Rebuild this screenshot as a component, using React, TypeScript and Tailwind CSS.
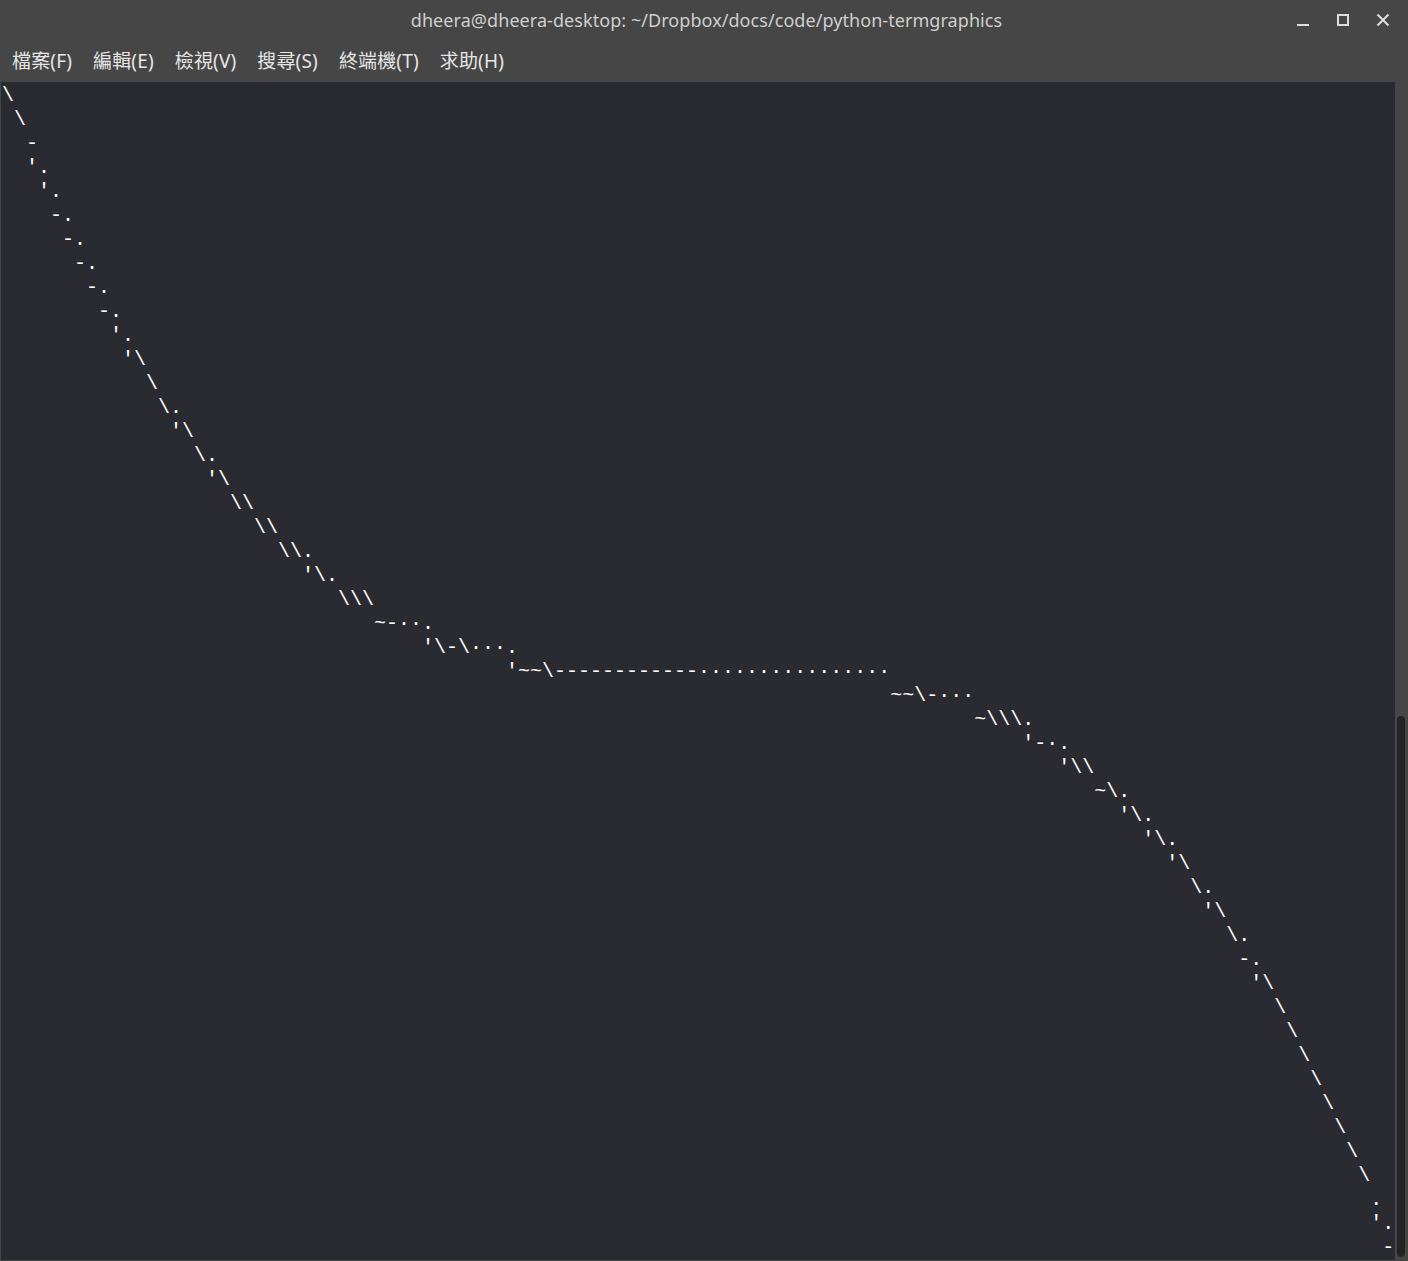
import React from 'react';

// rows of the plot: [column, text]
const ROWS: [number, string][] = [
  [0, '\\'],
  [1, '\\'],
  [2, '-'],
  [2, "'."],
  [3, "'."],
  [4, '-.'],
  [5, '-.'],
  [6, '-.'],
  [7, '-.'],
  [8, '-.'],
  [9, "'."],
  [10, "'\\"],
  [12, '\\'],
  [13, '\\.'],
  [14, "'\\"],
  [16, '\\.'],
  [17, "'\\"],
  [19, '\\\\'],
  [21, '\\\\'],
  [23, '\\\\.'],
  [25, "'\\."],
  [28, '\\\\\\'],
  [31, '~-··.'],
  [35, "'\\-\\···."],
  [42, "'~~\\------------················"],
  [74, '~~\\-···'],
  [81, '~\\\\\\.'],
  [85, "'-·."],
  [88, "'\\\\"],
  [91, '~\\.'],
  [93, "'\\."],
  [95, "'\\."],
  [97, "'\\"],
  [99, '\\.'],
  [100, "'\\"],
  [102, '\\.'],
  [103, '-.'],
  [104, "'\\"],
  [106, '\\'],
  [107, '\\'],
  [108, '\\'],
  [109, '\\'],
  [110, '\\'],
  [111, '\\'],
  [112, '\\'],
  [113, '\\'],
  [114, '.'],
  [114, "'."],
  [115, '-'],
];

const MENU = ['檔案(F)', '編輯(E)', '檢視(V)', '搜尋(S)', '終端機(T)', '求助(H)'];

export default function App() {
  const text = ROWS.map(([col, s]) => ' '.repeat(col) + s).join('\n');

  return (
    <div className="w-[1408px] h-[1261px] flex flex-col bg-[#464646] pb-[1px] overflow-hidden">
      {/* Title bar */}
      <div className="h-[40px] flex items-center shrink-0">
        <div className="w-[160px]" />
        <div className="flex-1 text-center text-[#cfcfcf] text-[18px] tracking-[0.06px] font-['Noto_Sans',sans-serif] leading-none pb-[1px] pl-[5px]">
          dheera@dheera-desktop: ~/Dropbox/docs/code/python-termgraphics
        </div>
        <div className="w-[160px] flex items-center justify-end gap-[26px] pr-[18px]">
          <svg width="14" height="14" viewBox="0 0 14 14" className="text-[#dedede]">
            <path d="M1 12h12" stroke="currentColor" strokeWidth="2" />
          </svg>
          <svg width="14" height="14" viewBox="0 0 14 14" className="text-[#dedede]">
            <rect x="2" y="2" width="10" height="10" fill="none" stroke="currentColor" strokeWidth="2" />
          </svg>
          <svg width="14" height="14" viewBox="0 0 14 14" className="text-[#dedede]">
            <path d="M1.5 1.5l11 11M12.5 1.5l-11 11" stroke="currentColor" strokeWidth="2" />
          </svg>
        </div>
      </div>

      {/* Menu bar */}
      <div className="h-[42px] flex items-center gap-[21px] pl-[12px] shrink-0 text-[#e6e6e6] text-[19px] tracking-[0.15px] font-['Noto_Sans','Noto_Sans_CJK_TC',sans-serif]">
        {MENU.map(m => (
          <span key={m}>{m}</span>
        ))}
      </div>

      {/* Terminal */}
      <div className="flex-1 flex min-h-0">
        <div className="flex-1 ml-[1px] bg-[#2a2b31] pt-[2px] pl-[1px] overflow-hidden">
          <pre className="m-0 text-white text-[20px] leading-[24px] font-['Liberation_Mono',monospace]">{text}</pre>
        </div>
        <div className="w-[13px] flex flex-col justify-end">
          <div className="ml-[2px] w-[8px] h-[541px] rounded-[4px] bg-[#232323] mb-[3px]" />
        </div>
      </div>
    </div>
  );
}
